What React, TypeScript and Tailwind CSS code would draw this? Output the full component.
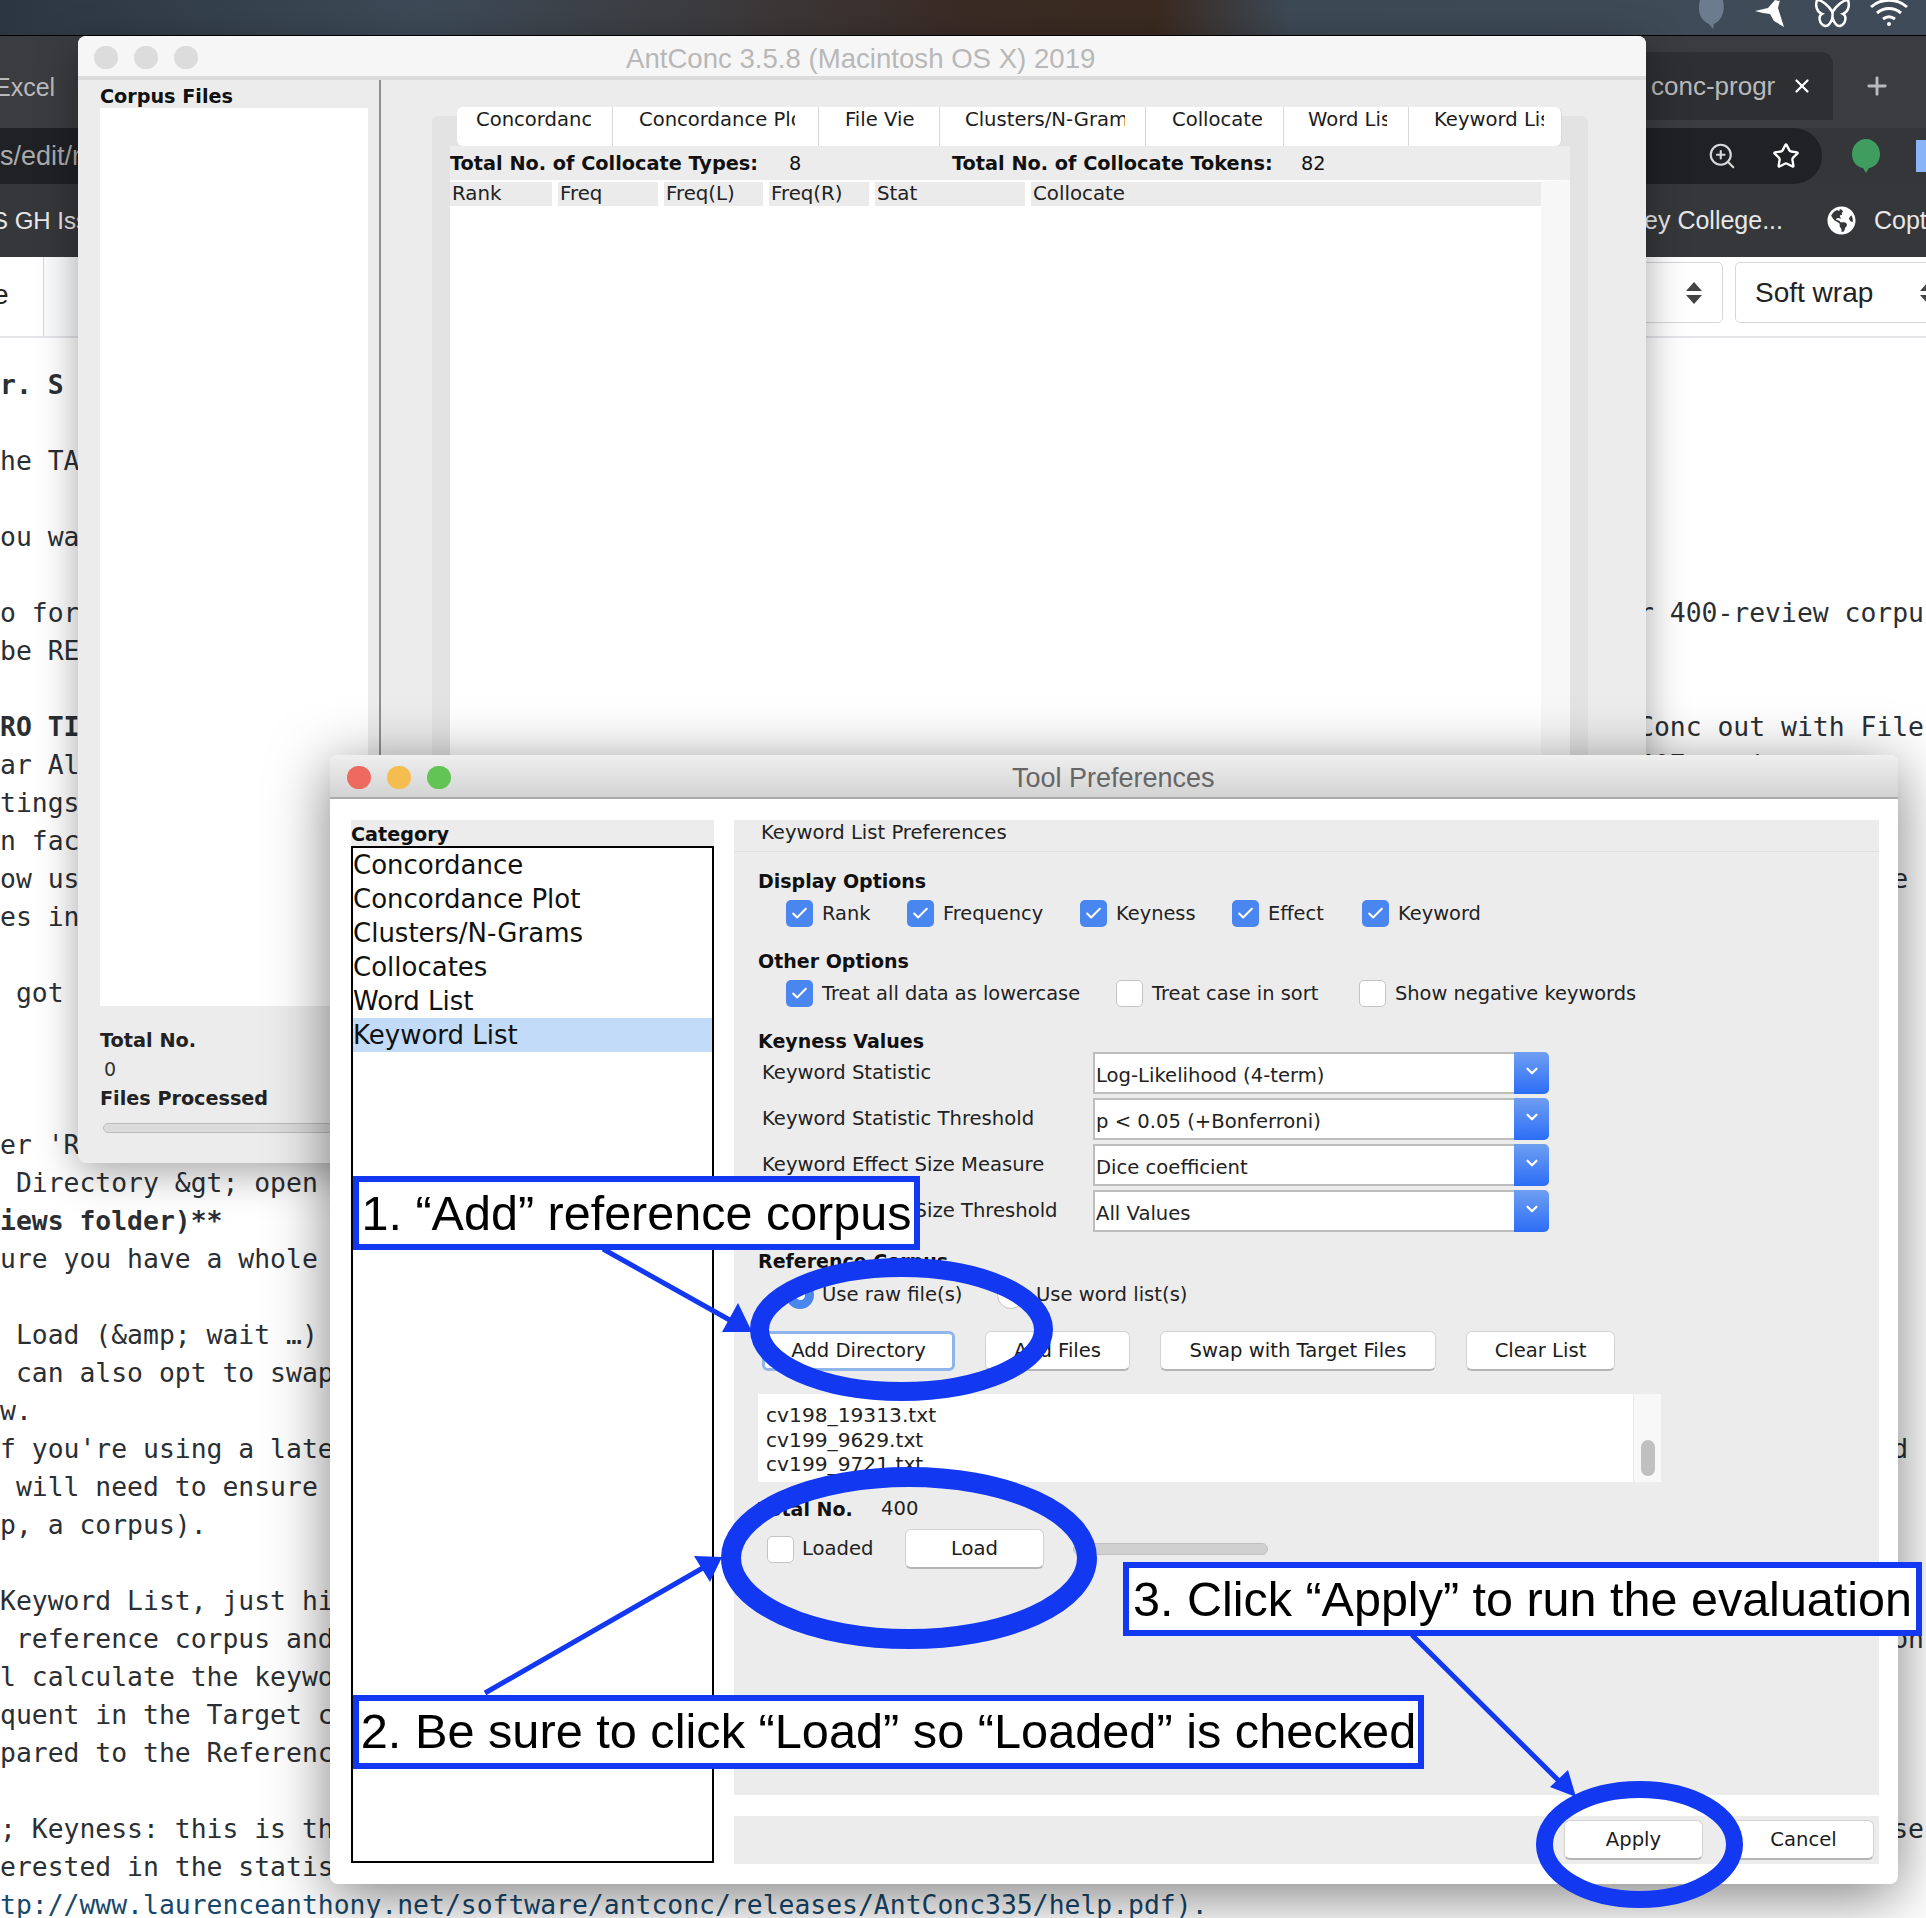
import { Star, ZoomIn, Plus, X, Check, ChevronDown } from "lucide-react";
import { FaGlobeAmericas } from "react-icons/fa";

const SANS = "font-['DejaVu_Sans',sans-serif]";
const ARIAL = "font-['Liberation_Sans',Arial,sans-serif]";

// [left text, right text, bold]
const EDITOR_LINES: [string, string?, boolean?][] = [
  ["r. S", "", true],
  [""],
  ["he TA"],
  [""],
  ["ou wa"],
  [""],
  ["o for", "r 400-review corpu"],
  ["be RE"],
  [""],
  ["RO TI", "Conc out with File", true],
  ["ar Al", "407 reviews"],
  ["tings"],
  ["n fac"],
  ["ow us", "                e"],
  ["es in"],
  [""],
  [" got"],
  [""],
  [""],
  [""],
  ["er 'R"],
  [" Directory &gt; open"],
  ["iews folder)**", "", true],
  ["ure you have a whole"],
  [""],
  [" Load (&amp; wait …)"],
  [" can also opt to swap"],
  ["w."],
  ["f you're using a late", "                d"],
  [" will need to ensure"],
  ["p, a corpus)."],
  [""],
  ["Keyword List, just hi"],
  [" reference corpus and", "                on"],
  ["l calculate the keywo"],
  ["quent in the Target c"],
  ["pared to the Referenc"],
  [""],
  ["; Keyness: this is th", "                se"],
  ["erested in the statis"],
];

const TABS = [
  { label: "Concordance", w: "w-[156px] rounded-l-[6px]", text: "w-[115px] ml-[19px]" },
  { label: "Concordance Plot", w: "w-[206px]", text: "w-[156px] ml-[26px]" },
  { label: "File View", w: "w-[121px]", text: "w-[70px] ml-[26px]" },
  { label: "Clusters/N-Grams", w: "w-[206px]", text: "w-[160px] ml-[25px]" },
  { label: "Collocates", w: "w-[138px] bg-[#e6e6e6]", text: "w-[90px] ml-[26px]" },
  { label: "Word List", w: "w-[125px]", text: "w-[79px] ml-[24px]" },
  { label: "Keyword List", w: "w-[153px] rounded-r-[6px]", text: "w-[110px] ml-[25px]" },
];

const HEADERS = [
  { label: "Rank", w: "w-[102px]" },
  { label: "Freq", w: "w-[100px]" },
  { label: "Freq(L)", w: "w-[99px]" },
  { label: "Freq(R)", w: "w-[100px]" },
  { label: "Stat", w: "w-[150px]" },
  { label: "Collocate", w: "flex-1" },
];

const CATEGORIES = ["Concordance", "Concordance Plot", "Clusters/N-Grams", "Collocates", "Word List", "Keyword List"];

const KEYNESS = [
  ["Keyword Statistic", "Log-Likelihood (4-term)"],
  ["Keyword Statistic Threshold", "p < 0.05 (+Bonferroni)"],
  ["Keyword Effect Size Measure", "Dice coefficient"],
  ["Keyword Effect Size Threshold", "All Values"],
];

function Lights({ colors }: { colors: string[] }) {
  return (
    <div className="flex gap-[16px]">
      {colors.map((c, i) => (
        <div key={i} className={`h-[23px] w-[24px] rounded-full ${c}`} />
      ))}
    </div>
  );
}

function CheckBox({ checked }: { checked?: boolean }) {
  return checked ? (
    <span className="flex h-[27px] w-[27px] shrink-0 items-center justify-center rounded-[5px] bg-[#4a86f0]">
      <Check className="h-[19px] w-[19px] text-white" strokeWidth={2.5} />
    </span>
  ) : (
    <span className="h-[27px] w-[27px] shrink-0 rounded-[5px] border border-[#c4c4c4] bg-white" />
  );
}

function Option({ label, checked, w }: { label: string; checked?: boolean; w: string }) {
  return (
    <div className={`flex h-[27px] items-center gap-[9px] ${w}`}>
      <CheckBox checked={checked} />
      <span className="text-[19.400px] leading-[27px] whitespace-nowrap text-[#222]">{label}</span>
    </div>
  );
}

function MacButton({ label, w, focus }: { label: string; w: string; focus?: boolean }) {
  return (
    <button
      className={`flex h-[40px] items-center justify-center rounded-[6px] bg-white text-[19.600px] text-[#1c1c1c] ${w} ${
        focus ? "border-[3px] border-[#8fb6ea]" : "border border-[#d2d2d2] border-b-2 border-b-[#b5b5b5]"
      }`}
    >
      {label}
    </button>
  );
}

function SectionTitle({ children, className }: { children: string; className: string }) {
  return <div className={`h-[22px] text-[19px] leading-[22px] font-bold text-[#111] ${className}`}>{children}</div>;
}

function MenuBar() {
  return (
    <div className="flex h-[36px] items-start justify-end border-b border-black bg-[linear-gradient(90deg,#2c3640_0%,#3d4a57_22%,#3c3a3c_38%,#3a2b25_50%,#3a2a20_60%,#3d4955_67%,#3f4b58_100%)] pr-[17px]">
      <svg width="28" height="30" viewBox="0 0 28 30" className="mr-[29px]">
        <path d="M14 0h-12c-3 10 0 20 9 24l4 5 1-5c9-4 11-14 9-24z" fill="#6c7b8d" />
      </svg>
      <svg width="34" height="27" viewBox="0 0 34 27" className="mr-[25px]">
        <path d="M0 11l13-3 7-8 4 1 1-1-2 8 6 19-10-6-4-7-7-1z" fill="#fff" />
      </svg>
      <svg width="37" height="29" viewBox="0 0 37 29" className="mr-[18px]" fill="none" stroke="#fff" strokeWidth="2.5">
        <path d="M18.5 12C15 6 8 0 3 0c-2 6 0 12 5 14-4 2-3 10 3 12 4 1 6-4 7.500-8 1.500 4 3.500 9 7.500 8 6-2 7-10 3-12 5-2 7-8 5-14-5 0-12 6-15.500 12z" />
        <path d="M18.5 12v10" />
      </svg>
      <svg width="40" height="27" viewBox="0 0 40 27" fill="none" stroke="#fff" strokeWidth="3">
        <path d="M2 7c10-9 26-9 36 0M8 13c7-6 17-6 24 0M14 19c4-3 8-3 12 0" />
        <circle cx="20" cy="24" r="2" fill="#fff" stroke="none" />
      </svg>
    </div>
  );
}

function BrowserChrome() {
  return (
    <div className={`${ARIAL} text-[25px]`}>
      <div className="flex h-[92px] bg-[#3b3c3f] pt-[16px]">
        <span className="-ml-[6px] pt-[17px] leading-[36px] text-[#b9babc]">Excel</span>
        <div className="ml-auto flex h-[68px] w-[187px] items-center justify-end rounded-tr-[12px] bg-[#2e2f32] pr-[20px]">
          <span className="mr-[4px] w-[136px] overflow-hidden text-[26px] whitespace-nowrap text-[#b9babc]">conc-progr</span>
          <X className="h-[22px] w-[22px] text-white" strokeWidth={2.5} />
        </div>
        <div className="flex h-[68px] w-[93px] items-center pl-[30px]">
          <Plus className="h-[28px] w-[28px] text-[#b9babc]" strokeWidth={2.5} />
        </div>
      </div>
      <div className="flex h-[56px] bg-[#35363a]">
        <div className="flex w-[1822px] items-center rounded-r-[28px] bg-[#202124]">
          <span className="text-[27px] text-[#a9aaac]">s/edit/r</span>
          <ZoomIn className="ml-auto h-[30px] w-[30px] text-[#d8d8d8]" strokeWidth={1.7} />
          <Star className="mx-[22px] ml-[35px] h-[28px] w-[28px] text-white" strokeWidth={2} />
        </div>
        <div className="ml-[30px] flex items-center">
          <svg width="28" height="34" viewBox="0 0 28 34">
            <path d="M14 0C6 0 0 7 0 15s5 13 11 14l3 5 3-5c6-1 11-6 11-14S22 0 14 0z" fill="#3f9e5f" />
          </svg>
        </div>
        <div className="ml-auto h-[32px] w-[10px] self-center bg-[#8ab4f8]" />
      </div>
      <div className="flex h-[73px] items-center justify-between bg-[#36373a] text-[#e8e8e8]">
        <span className="-ml-[8px] text-[24px]">S GH Iss</span>
        <div className="flex items-center">
          <span className="mr-[44px]">ey College...</span>
          <FaGlobeAmericas className="mr-[18px] h-[29px] w-[29px] text-white" />
          <span className="w-[52px] overflow-hidden">Copt</span>
        </div>
      </div>
    </div>
  );
}

function EditorToolbar() {
  return (
    <div className={`${ARIAL} flex h-[81px] border-b-2 border-[#e3e5e8] bg-white`}>
      <span className="-ml-[7px] w-[50px] pt-[17px] text-[28px] text-[#222]">e</span>
      <div className="h-full w-[60px] border-l border-[#d5d7da] bg-[#fafbfc]" />
      <div className="ml-auto flex pt-[5px]">
        <div className="flex h-[61px] w-[90px] items-center justify-end rounded-r-[5px] border border-[#d5d7da] pr-[19px]">
          <Updown />
        </div>
        <div className="-mr-[12px] ml-[12px] flex h-[61px] w-[203px] items-center justify-between rounded-l-[5px] border border-[#d5d7da] pl-[19px] text-[28px] text-[#222]">
          Soft wrap
          <Updown />
        </div>
      </div>
    </div>
  );
}

function Updown() {
  return (
    <svg width="18" height="24" viewBox="0 0 18 24" fill="#444">
      <path d="M9 1l8 9H1zM9 23l8-9H1z" />
    </svg>
  );
}

function EditorBody() {
  return (
    <div className="font-['DejaVu_Sans_Mono',monospace] text-[26.4px] leading-[38px] text-[#2b2f33]">
      <div className="pt-[28px]">
        {EDITOR_LINES.map(([left, right, bold], i) => (
          <div key={i} className="flex h-[38px] justify-between whitespace-pre">
            <span className={bold ? "font-bold" : ""}>{left}</span>
            {right && <span className="w-[288px] overflow-hidden">{right}</span>}
          </div>
        ))}
        <div className="h-[38px] whitespace-pre text-[#17486b]">
          tp://www.laurenceanthony.net/software/antconc/releases/AntConc335/help.pdf).
        </div>
      </div>
    </div>
  );
}

function AntConcWindow() {
  return (
    <div className={`${SANS} absolute top-[36px] left-[78px] flex h-[1127px] w-[1568px] flex-col overflow-hidden rounded-[8px] bg-[#ececec] shadow-[0_10px_40px_rgba(0,0,0,0.35)]`}>
      <div className="flex h-[44px] shrink-0 items-center border-b-[4px] border-[#dcdcdc] bg-[#f6f6f6] pt-[2px] pl-[16px]">
        <Lights colors={["bg-[#dcdcdc]", "bg-[#dcdcdc]", "bg-[#dcdcdc]"]} />
        <span className={`${ARIAL} ml-[428px] pt-[3px] text-[27.600px] leading-[34px] text-[#b8b8b8]`}>AntConc 3.5.8 (Macintosh OS X) 2019</span>
      </div>
      <div className="flex flex-1">
        <div className="flex w-[303px] shrink-0 flex-col border-r-2 border-[#8f8f8f] pt-[6px] pr-[11px] pl-[22px]">
          <div className="h-[22px] text-[19.200px] leading-[22px] font-bold text-[#111]">Corpus Files</div>
          <div className="h-[898px] bg-white" />
          <div className="mt-[24px] text-[19.300px] leading-[22px] font-bold text-[#222]">Total No.</div>
          <div className="mt-[6px] pl-[4px] text-[19px] leading-[22px] text-[#333]">0</div>
          <div className="mt-[8px] text-[19.200px] leading-[22px] font-bold text-[#222]">Files Processed</div>
          <div className="mt-[13px] ml-[3px] h-[10px] w-[300px] rounded-full border border-[#bbb] bg-[#dcdcdc]" />
        </div>
        <div className="flex-1 pt-[36px] pr-[58px] pl-[51px]">
          <div className="relative h-full rounded-t-[6px] bg-[#e3e3e3] px-[18px] pt-[30px]">
            <div className="absolute top-[-9px] left-[25px] flex h-[39px]">
              {TABS.map((t) => (
                <div key={t.label} className={`h-full border-r border-[#d8d8d8] bg-white text-[19.600px] leading-[26px] text-[#1c1c1c] ${t.w}`}>
                  <div className={`overflow-hidden whitespace-nowrap ${t.text}`}>{t.label}</div>
                </div>
              ))}
            </div>
            <div className="flex h-[34px] items-center bg-[#ececec] pt-[2px] text-[19.300px] text-[#111]">
              <b className="w-[339px] whitespace-nowrap">Total No. of Collocate Types:</b>
              <span className="w-[163px]">8</span>
              <b className="w-[349px] whitespace-nowrap">Total No. of Collocate Tokens:</b>
              <span>82</span>
            </div>
            <div className="flex h-[26px] gap-[6px] border-t-2 border-r-[29px] border-t-white border-r-[#f7f7f7] bg-white text-[19.800px] text-[#222]">
              {HEADERS.map((h) => (
                <div key={h.label} className={`bg-[#ebebeb] pl-[2px] leading-[24px] ${h.w}`}>
                  {h.label}
                </div>
              ))}
            </div>
            <div className="h-full border-r-[29px] border-[#f7f7f7] bg-white" />
          </div>
        </div>
      </div>
    </div>
  );
}

function KeywordPanel() {
  return (
    <div className="h-[975px] bg-[#ececec] text-[19.600px]">
      <div className="h-[32px] border-b border-[#e0e0e0] pl-[27px] leading-[26px] text-[#222]">Keyword List Preferences</div>
      <div className="flex flex-col pl-[24px]">
        <SectionTitle className="mt-[18px]">Display Options</SectionTitle>
        <div className="mt-[8px] ml-[28px] flex">
          <Option label="Rank" checked w="w-[121px]" />
          <Option label="Frequency" checked w="w-[173px]" />
          <Option label="Keyness" checked w="w-[152px]" />
          <Option label="Effect" checked w="w-[130px]" />
          <Option label="Keyword" checked w="w-[130px]" />
        </div>
        <SectionTitle className="mt-[23px]">Other Options</SectionTitle>
        <div className="mt-[8px] ml-[28px] flex">
          <Option label="Treat all data as lowercase" checked w="w-[330px]" />
          <Option label="Treat case in sort" w="w-[243px]" />
          <Option label="Show negative keywords" w="w-[330px]" />
        </div>
        <SectionTitle className="mt-[23px]">Keyness Values</SectionTitle>
        <div className="flex flex-col gap-[4px]">
          {KEYNESS.map(([label, value]) => (
            <div key={label} className="flex h-[42px] items-center">
              <span className="w-[335px] pl-[4px] whitespace-nowrap text-[#222]">{label}</span>
              <div className="flex h-full w-[456px]">
                <div className="flex-1 border-y-2 border-l-2 border-[#bdbdbd] bg-white pt-[10px] pl-[1px] leading-[24px] whitespace-nowrap text-[#222]">
                  {value}
                </div>
                <div className="flex w-[35px] items-center justify-center rounded-r-[5px] bg-[linear-gradient(180deg,#6f9ff2,#2c6df6)] pb-[4px]">
                  <ChevronDown className="h-[18px] w-[18px] text-white" strokeWidth={3} />
                </div>
              </div>
            </div>
          ))}
        </div>
        <SectionTitle className="mt-[18px]">Reference Corpus</SectionTitle>
        <div className="mt-[9px] ml-[28px] flex h-[28px]">
          <div className="flex w-[211px] items-center gap-[8px]">
            <span className="flex h-[28px] w-[28px] items-center justify-center rounded-full bg-[#4a86f0]">
              <span className="h-[9px] w-[9px] rounded-full bg-white" />
            </span>
            <span className="text-[#222]">Use raw file(s)</span>
          </div>
          <div className="flex items-center gap-[11px]">
            <span className="h-[28px] w-[28px] rounded-full border border-[#c4c4c4] bg-white" />
            <span className="text-[#222]">Use word list(s)</span>
          </div>
        </div>
        <div className="mt-[22px] ml-[4px] flex gap-[30px]">
          <MacButton label="Add Directory" w="w-[193px]" focus />
          <MacButton label="Add Files" w="w-[145px]" />
          <MacButton label="Swap with Target Files" w="w-[276px]" />
          <MacButton label="Clear List" w="w-[149px]" />
        </div>
        <div className="mt-[23px] flex h-[88px] w-[903px] bg-white">
          <div className="flex-1 overflow-hidden pt-[9px] pl-[8px] text-[20.200px] leading-[24.500px] text-[#222]">
            <div>cv198_19313.txt</div>
            <div>cv199_9629.txt</div>
            <div>cv199_9721.txt</div>
          </div>
          <div className="w-[28px] border-l border-[#e8e8e8] bg-[#f8f8f8] pt-[46px] pl-[7px]">
            <div className="h-[36px] w-[14px] rounded-full bg-[#c0c0c0]" />
          </div>
        </div>
        <div className="mt-[16px] flex h-[22px] leading-[22px]">
          <b className="w-[123px] text-[19px] text-[#111]">Total No.</b>
          <span className="text-[#222]">400</span>
        </div>
        <div className="mt-[9px] ml-[9px] flex h-[40px] items-center">
          <CheckBox />
          <span className="ml-[8px] w-[103px] text-[#222]">Loaded</span>
          <MacButton label="Load" w="w-[139px]" />
          <div className="ml-[29px] h-[12px] w-[195px] rounded-full border border-[#c0c0c0] bg-[#d0d0d0]" />
        </div>
      </div>
    </div>
  );
}

function PreferencesDialog() {
  return (
    <div className={`${SANS} absolute top-[755px] left-[330px] flex h-[1129px] w-[1568px] flex-col overflow-hidden rounded-[8px] bg-white shadow-[0_12px_60px_rgba(0,0,0,0.5)]`}>
      <div className="relative flex h-[44px] shrink-0 items-center border-b-2 border-[#ababab] bg-[linear-gradient(180deg,#efefef,#d3d3d3)] pt-[2px] pl-[17px]">
        <Lights colors={["bg-[#ee6a5f]", "bg-[#f5bd4f]", "bg-[#61c454]"]} />
        <span className={`${ARIAL} ml-[561px] pt-[2px] text-[27px] text-[#666]`}>Tool Preferences</span>
      </div>
      <div className="flex flex-1 gap-[20px] pt-[21px] pl-[21px]">
        <div className="w-[363px]">
          <div className="h-[26px] bg-[#ececec] pt-[3px] text-[19.200px] leading-[24px] font-bold text-[#111]">Category</div>
          <div className="h-[1017px] border-2 border-black bg-white text-[26px] text-[#111]">
            {CATEGORIES.map((c) => (
              <div key={c} className={`h-[34px] leading-[34px] ${c === "Keyword List" ? "bg-[#c2dbf9]" : ""}`}>
                {c}
              </div>
            ))}
          </div>
        </div>
        <div className="w-[1145px]">
          <KeywordPanel />
          <div className="mt-[21px] flex h-[48px] items-center justify-end gap-[30px] bg-[#ececec] pr-[5px]">
            <MacButton label="Apply" w="w-[139px]" />
            <MacButton label="Cancel" w="w-[141px]" />
          </div>
        </div>
      </div>
    </div>
  );
}

function Callout({ text, pos, size }: { text: string; pos: string; size: string }) {
  return (
    <div className={`${ARIAL} ${pos} ${size} absolute flex h-[74px] items-center justify-center border-[6px] border-[#1238f2] bg-white whitespace-nowrap text-black`}>
      {text}
    </div>
  );
}

function Annotations() {
  return (
    <>
      <svg className="absolute top-0 left-0" width="1926" height="1918" fill="none" stroke="#1238f2">
        <ellipse cx="901.500" cy="1329.500" rx="142" ry="62" strokeWidth="19" />
        <ellipse cx="909" cy="1558" rx="178" ry="81" strokeWidth="20" />
        <ellipse cx="1639.500" cy="1844.500" rx="95" ry="55" strokeWidth="17" />
        <path d="M603 1249L735 1323M485 1693L708 1565M1412 1635L1563 1785" strokeWidth="5" />
        <path d="M752 1332L722 1332L738 1303zM722 1557L710 1582L694 1556zM1576 1797L1550 1787L1568 1770z" fill="#1238f2" stroke="none" />
      </svg>
      <Callout text="1. “Add” reference corpus" pos="top-[1176px] left-[353px]" size="w-[567px] text-[48.500px]" />
      <Callout text="2. Be sure to click “Load” so “Loaded” is checked" pos="top-[1695px] left-[353px]" size="w-[1071px] text-[48.700px]" />
      <Callout text="3. Click “Apply” to run the evaluation" pos="top-[1562px] left-[1123px]" size="w-[799px] text-[48.500px]" />
    </>
  );
}

export default function App() {
  return (
    <div className="relative h-[1918px] w-[1926px] overflow-hidden bg-white">
      <MenuBar />
      <BrowserChrome />
      <EditorToolbar />
      <EditorBody />
      <AntConcWindow />
      <PreferencesDialog />
      <Annotations />
    </div>
  );
}
